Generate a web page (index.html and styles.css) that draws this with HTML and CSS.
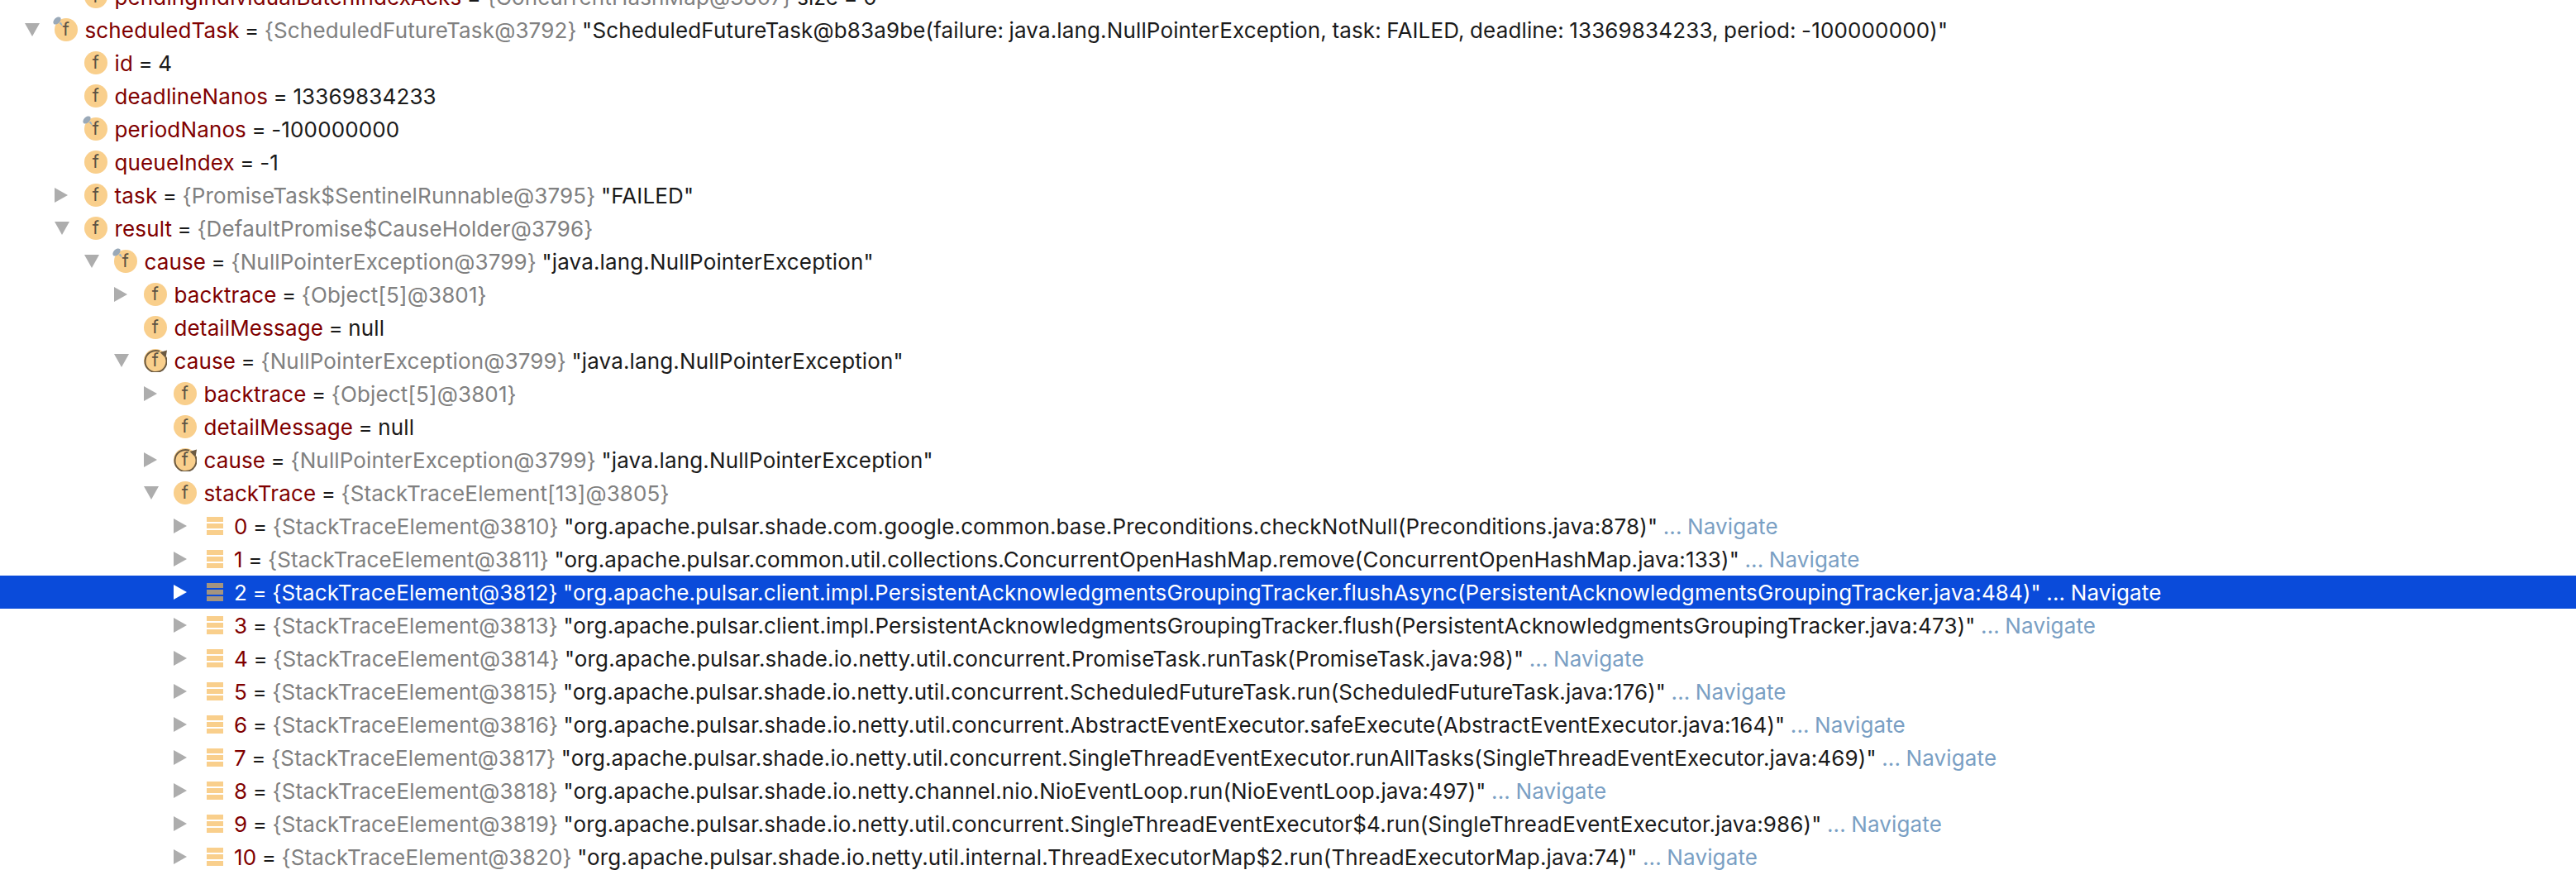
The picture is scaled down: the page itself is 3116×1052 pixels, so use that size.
FILE: index.html
```html
<!DOCTYPE html>
<html lang="en">
<head>
<meta charset="utf-8">
<title>Debugger variables</title>
<link rel="stylesheet" href="styles.css">
</head>
<body>
<svg class="defs" aria-hidden="true">
  <symbol id="pin" viewBox="0 0 16 16">
    <ellipse cx="5" cy="6" rx="5.500" ry="3.500" transform="rotate(-45 5 6)" fill="#9aa9b8"/>
    <path d="M7.500 9 L12 13 L10 8 Z" fill="#8fb0cc"/>
  </symbol>
  <symbol id="loop" viewBox="0 0 28 28">
    <path d="M19 2.800 A13 13 0 1 0 26.500 10" fill="none" stroke="#6b5a42" stroke-width="2"/>
    <path d="M28 1.500 L19.500 4 L26.500 11 Z" fill="#6b5a42"/>
  </symbol>
</svg>
<div class="tree">
  <div class="row l1"><i class="arrow none"></i><span class="ico">f</span><span class="txt"><b>pendingIndividualBatchIndexAcks</b> = <em>{ConcurrentHashMap@3807}</em> size = 0</span></div>
  <div class="row l0"><i class="arrow down"></i><span class="ico">f<svg class="pin"><use href="#pin"/></svg></span><span class="txt"><b>scheduledTask</b> = <em>{ScheduledFutureTask@3792}</em> "ScheduledFutureTask@b83a9be(failure: java.lang.NullPointerException, task: FAILED, deadline: 13369834233, period: -100000000)"</span></div>
  <div class="row l1"><i class="arrow none"></i><span class="ico">f</span><span class="txt"><b>id</b> = 4</span></div>
  <div class="row l1"><i class="arrow none"></i><span class="ico">f</span><span class="txt"><b>deadlineNanos</b> = 13369834233</span></div>
  <div class="row l1"><i class="arrow none"></i><span class="ico">f<svg class="pin"><use href="#pin"/></svg></span><span class="txt"><b>periodNanos</b> = -100000000</span></div>
  <div class="row l1"><i class="arrow none"></i><span class="ico">f</span><span class="txt"><b>queueIndex</b> = -1</span></div>
  <div class="row l1"><i class="arrow"></i><span class="ico">f</span><span class="txt"><b>task</b> = <em>{PromiseTask$SentinelRunnable@3795}</em> "FAILED"</span></div>
  <div class="row l1"><i class="arrow down"></i><span class="ico">f</span><span class="txt"><b>result</b> = <em>{DefaultPromise$CauseHolder@3796}</em></span></div>
  <div class="row l2"><i class="arrow down"></i><span class="ico">f<svg class="pin"><use href="#pin"/></svg></span><span class="txt"><b>cause</b> = <em>{NullPointerException@3799}</em> "java.lang.NullPointerException"</span></div>
  <div class="row l3"><i class="arrow"></i><span class="ico">f</span><span class="txt"><b>backtrace</b> = <em>{Object[5]@3801}</em></span></div>
  <div class="row l3"><i class="arrow none"></i><span class="ico">f</span><span class="txt"><b>detailMessage</b> = null</span></div>
  <div class="row l3"><i class="arrow down"></i><span class="ico">f<svg class="loop"><use href="#loop"/></svg></span><span class="txt"><b>cause</b> = <em>{NullPointerException@3799}</em> "java.lang.NullPointerException"</span></div>
  <div class="row l4"><i class="arrow"></i><span class="ico">f</span><span class="txt"><b>backtrace</b> = <em>{Object[5]@3801}</em></span></div>
  <div class="row l4"><i class="arrow none"></i><span class="ico">f</span><span class="txt"><b>detailMessage</b> = null</span></div>
  <div class="row l4"><i class="arrow"></i><span class="ico">f<svg class="loop"><use href="#loop"/></svg></span><span class="txt"><b>cause</b> = <em>{NullPointerException@3799}</em> "java.lang.NullPointerException"</span></div>
  <div class="row l4"><i class="arrow down"></i><span class="ico">f</span><span class="txt"><b>stackTrace</b> = <em>{StackTraceElement[13]@3805}</em></span></div>
  <div class="row l5"><i class="arrow"></i><span class="bars"></span><span class="txt"><b>0</b> = <em>{StackTraceElement@3810}</em> "org.apache.pulsar.shade.com.google.common.base.Preconditions.checkNotNull(Preconditions.java:878)" <a>... Navigate</a></span></div>
  <div class="row l5"><i class="arrow"></i><span class="bars"></span><span class="txt"><b>1</b> = <em>{StackTraceElement@3811}</em> "org.apache.pulsar.common.util.collections.ConcurrentOpenHashMap.remove(ConcurrentOpenHashMap.java:133)" <a>... Navigate</a></span></div>
  <div class="row l5 sel"><i class="arrow"></i><span class="bars"></span><span class="txt"><b>2</b> = <em>{StackTraceElement@3812}</em> "org.apache.pulsar.client.impl.PersistentAcknowledgmentsGroupingTracker.flushAsync(PersistentAcknowledgmentsGroupingTracker.java:484)" <a>... Navigate</a></span></div>
  <div class="row l5"><i class="arrow"></i><span class="bars"></span><span class="txt"><b>3</b> = <em>{StackTraceElement@3813}</em> "org.apache.pulsar.client.impl.PersistentAcknowledgmentsGroupingTracker.flush(PersistentAcknowledgmentsGroupingTracker.java:473)" <a>... Navigate</a></span></div>
  <div class="row l5"><i class="arrow"></i><span class="bars"></span><span class="txt"><b>4</b> = <em>{StackTraceElement@3814}</em> "org.apache.pulsar.shade.io.netty.util.concurrent.PromiseTask.runTask(PromiseTask.java:98)" <a>... Navigate</a></span></div>
  <div class="row l5"><i class="arrow"></i><span class="bars"></span><span class="txt"><b>5</b> = <em>{StackTraceElement@3815}</em> "org.apache.pulsar.shade.io.netty.util.concurrent.ScheduledFutureTask.run(ScheduledFutureTask.java:176)" <a>... Navigate</a></span></div>
  <div class="row l5"><i class="arrow"></i><span class="bars"></span><span class="txt"><b>6</b> = <em>{StackTraceElement@3816}</em> "org.apache.pulsar.shade.io.netty.util.concurrent.AbstractEventExecutor.safeExecute(AbstractEventExecutor.java:164)" <a>... Navigate</a></span></div>
  <div class="row l5"><i class="arrow"></i><span class="bars"></span><span class="txt"><b>7</b> = <em>{StackTraceElement@3817}</em> "org.apache.pulsar.shade.io.netty.util.concurrent.SingleThreadEventExecutor.runAllTasks(SingleThreadEventExecutor.java:469)" <a>... Navigate</a></span></div>
  <div class="row l5"><i class="arrow"></i><span class="bars"></span><span class="txt"><b>8</b> = <em>{StackTraceElement@3818}</em> "org.apache.pulsar.shade.io.netty.channel.nio.NioEventLoop.run(NioEventLoop.java:497)" <a>... Navigate</a></span></div>
  <div class="row l5"><i class="arrow"></i><span class="bars"></span><span class="txt"><b>9</b> = <em>{StackTraceElement@3819}</em> "org.apache.pulsar.shade.io.netty.util.concurrent.SingleThreadEventExecutor$4.run(SingleThreadEventExecutor.java:986)" <a>... Navigate</a></span></div>
  <div class="row l5"><i class="arrow"></i><span class="bars"></span><span class="txt"><b>10</b> = <em>{StackTraceElement@3820}</em> "org.apache.pulsar.shade.io.netty.util.internal.ThreadExecutorMap$2.run(ThreadExecutorMap.java:74)" <a>... Navigate</a></span></div>
</div>
</body>
</html>
```
FILE: styles.css
```css
html, body { margin: 0; height: 1052px; overflow: hidden; background: #fff; }
.defs { display: none; }
.tree { margin-top: -24px; font-family: Inter, "Liberation Sans", sans-serif; font-size: 26px; letter-spacing: 0.14px; word-spacing: -1px; color: #1a1a1a; }
.row { display: flex; align-items: center; height: 40px; white-space: nowrap; }
.l0 { padding-left: 30px; }
.l1 { padding-left: 66px; }
.l2 { padding-left: 102px; }
.l3 { padding-left: 138px; }
.l4 { padding-left: 174px; }
.l5 { padding-left: 210px; }
.arrow { flex: none; width: 0; height: 0; margin-right: 20px; border-style: solid; border-width: 9px 0 9px 16px; border-color: transparent transparent transparent #adadad; }
.arrow.down { margin-right: 18px; border-width: 16px 9px 0 9px; border-color: #adadad transparent transparent transparent; }
.arrow.none { border-color: transparent; }
.ico { flex: none; position: relative; width: 28px; height: 28px; margin-right: 8.5px; border-radius: 50%; background: #f9cf8c; color: #5c5344; font-size: 22px; line-height: 27px; text-align: center; }
.pin { position: absolute; left: -2px; top: -3px; width: 16px; height: 16px; }
.loop { position: absolute; left: 0; top: 0; width: 28px; height: 28px; overflow: visible; }
.bars { flex: none; width: 20px; height: 22px; margin: 0 13px 0 4px; background: repeating-linear-gradient(#f9cf8c 0 6px, transparent 6px 8px); }
.txt b { font-weight: 400; color: #7f0000; }
.txt em { font-style: normal; color: #808080; }
.txt a { color: #7a9fc4; }
.sel { background: #0a4bda; color: #fff; }
.sel .arrow { border-left-color: #fff; }
.sel .bars { background: repeating-linear-gradient(#a39480 0 6px, transparent 6px 8px); }
.sel .txt b, .sel .txt em, .sel .txt a { color: #fff; }
```
